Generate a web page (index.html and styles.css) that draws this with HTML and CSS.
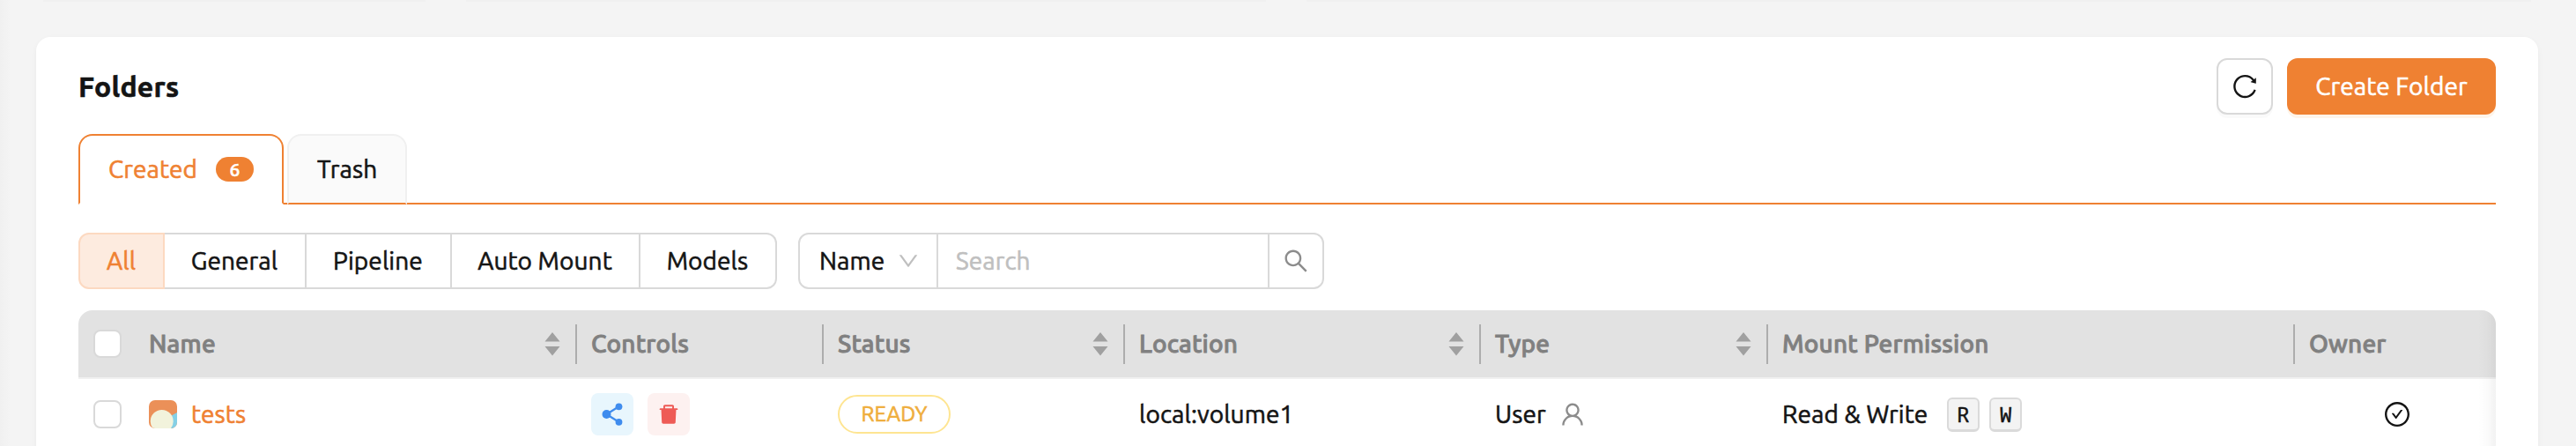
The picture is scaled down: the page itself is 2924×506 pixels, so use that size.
FILE: index.html
```html
<!DOCTYPE html>
<html lang="en">
<head>
<meta charset="utf-8">
<title>Folders</title>
<link rel="stylesheet" href="styles.css">
</head>
<body>
<div class="page">
  <div class="upper-row"><div class="upper-card"></div><div class="upper-card"></div><div class="upper-card"></div></div>
  <main class="card">
    <header class="card-head">
      <h1 class="title">Folders</h1>
      <div class="actions">
        <button class="btn btn-icon" aria-label="Refresh">
          <svg width="28" height="28" viewBox="64 64 896 896" fill="currentColor"><path d="M909.1 209.3l-56.4 44.1C775.8 155.1 656.2 92 521.9 92 290 92 102.3 279.500 102 511.500 101.700 743.700 289.800 932 521.900 932c181.300 0 335.800-115 394.600-276.100 1.500-4.200-.7-8.900-4.900-10.300l-56.700-19.500a8 8 0 00-10.100 4.800c-1.800 5-3.800 10-5.900 14.900-17.300 41-42.100 77.800-73.700 109.400A344.770 344.770 0 01655.900 829c-42.300 17.900-87.400 27-133.800 27-46.500 0-91.500-9.100-133.800-27A341.500 341.500 0 01279 755.200a342.160 342.160 0 01-73.700-109.400c-17.900-42.400-27-87.400-27-133.900s9.100-91.500 27-133.900c17.300-41 42.100-77.800 73.700-109.400 31.600-31.600 68.400-56.400 109.300-73.800 42.300-17.900 87.400-27 133.800-27 46.500 0 91.500 9.100 133.800 27a341.500 341.500 0 01109.300 73.800c9.900 9.900 19.200 20.400 27.800 31.400l-60.200 47a8 8 0 003 14.100l175.600 43c5 1.200 9.900-2.600 9.900-7.700l.8-180.900c-.1-6.600-7.800-10.300-13-6.200z"/></svg>
        </button>
        <button class="btn btn-primary"><span>Create Folder</span></button>
      </div>
    </header>
    <nav class="tabs">
      <div class="tab tab-active"><span class="t-created">Created</span><span class="badge">6</span></div>
      <div class="tab tab-trash"><span class="t-trash">Trash</span></div>
    </nav>
    <div class="filters">
      <div class="segments">
        <div class="seg seg-all"><span>All</span></div>
        <div class="seg seg-general"><span>General</span></div>
        <div class="seg seg-pipeline"><span>Pipeline</span></div>
        <div class="seg seg-auto"><span>Auto Mount</span></div>
        <div class="seg seg-models"><span>Models</span></div>
      </div>
      <div class="search">
        <div class="search-field"><span>Name</span>
          <svg width="24" height="24" viewBox="64 64 896 896" fill="currentColor"><path d="M884 256h-75c-5.100 0-9.900 2.500-12.900 6.600L512 654.200 227.900 262.600c-3-4.100-7.800-6.600-12.900-6.600h-75c-6.500 0-10.300 7.400-6.500 12.700l352.600 486.100c12.800 17.600 39 17.600 51.700 0l352.600-486.100c3.900-5.300.1-12.700-6.400-12.700z"/></svg>
        </div>
        <div class="search-input"><span>Search</span></div>
        <div class="search-go">
          <svg width="28" height="28" viewBox="64 64 896 896" fill="currentColor"><path d="M909.600 854.500L649.900 594.800C690.200 542.700 712 479 712 412c0-80.200-31.300-155.400-87.900-212.100-56.600-56.700-132-87.900-212.100-87.900s-155.500 31.300-212.100 87.900C143.200 256.500 112 331.800 112 412c0 80.100 31.300 155.500 87.900 212.100C256.500 680.800 331.800 712 412 712c67 0 130.600-21.800 182.700-62l259.700 259.600a8.200 8.200 0 0011.600 0l43.600-43.500a8.200 8.200 0 000-11.600zM570.400 570.400C528 612.700 471.800 636 412 636s-116-23.300-158.400-65.600C211.300 528 188 471.800 188 412s23.300-116.100 65.600-158.400C296 211.300 352.200 188 412 188s116.100 23.200 158.400 65.600S636 352.200 636 412s-23.300 116.100-65.600 158.400z"/></svg>
        </div>
      </div>
    </div>
    <section class="table">
      <div class="row row-head">
        <div class="cell cell-check"><i class="checkbox"></i></div>
        <div class="cell cell-first"><span class="h-name">Name</span><svg class="sorter" width="18" height="28" viewBox="0 0 18 28"><path d="M9 1l8.500 10.500H.5zM9 27.500L.5 17h17z"/></svg></div>
        <div class="cell"><span class="h-controls">Controls</span></div>
        <div class="cell"><span class="h-status">Status</span><svg class="sorter" width="18" height="28" viewBox="0 0 18 28"><path d="M9 1l8.500 10.500H.5zM9 27.500L.5 17h17z"/></svg></div>
        <div class="cell"><span class="h-location">Location</span><svg class="sorter" width="18" height="28" viewBox="0 0 18 28"><path d="M9 1l8.500 10.500H.5zM9 27.500L.5 17h17z"/></svg></div>
        <div class="cell"><span class="h-type">Type</span><svg class="sorter" width="18" height="28" viewBox="0 0 18 28"><path d="M9 1l8.500 10.500H.5zM9 27.500L.5 17h17z"/></svg></div>
        <div class="cell"><span class="h-mount">Mount Permission</span></div>
        <div class="cell"><span class="h-owner">Owner</span></div>
      </div>
      <div class="row row-body">
        <div class="cell cell-check"><i class="checkbox"></i></div>
        <div class="cell cell-first cell-name">
          <svg class="avatar" width="32" height="32" viewBox="0 0 32 32"><path fill="#eb9058" d="M0 0h32v32H0z"/><path fill="#84d0e6" d="M32 14v18h-7l-2-13z"/><circle cx="14.700" cy="24" r="13" fill="#f2f3dc"/></svg>
          <span class="t-tests">tests</span>
        </div>
        <div class="cell cell-controls">
          <span class="tool tool-share"><svg width="28" height="28" viewBox="0 0 28 28"><path d="M7.500 14L21 5.500M7.500 14L21 22.500" fill="none" stroke="currentColor" stroke-width="2.200"/><circle cx="7.500" cy="14" r="5" fill="currentColor"/><circle cx="21.500" cy="5.300" r="3.900" fill="currentColor"/><circle cx="21.500" cy="22.800" r="3.900" fill="currentColor"/></svg></span>
          <span class="tool tool-trash"><svg width="24" height="24" viewBox="64 64 896 896" fill="currentColor"><path d="M864 256H736v-80c0-35.300-28.700-64-64-64H352c-35.300 0-64 28.700-64 64v80H160c-17.700 0-32 14.300-32 32v32c0 4.400 3.600 8 8 8h60.400l24.700 523c1.600 34.100 29.800 61 63.900 61h454c34.200 0 62.300-26.800 63.900-61l24.700-523H888c4.400 0 8-3.600 8-8v-32c0-17.700-14.300-32-32-32zm-200 0H360v-72h304v72z"/></svg></span>
        </div>
        <div class="cell"><span class="tag"><span>READY</span></span></div>
        <div class="cell"><span class="t-local">local:volume1</span></div>
        <div class="cell cell-type"><span class="t-user">User</span>
          <svg width="28" height="28" viewBox="64 64 896 896" fill="currentColor"><path d="M858.500 763.600a374 374 0 00-80.600-119.500 375.630 375.630 0 00-119.500-80.600c-.4-.2-.8-.3-1.200-.5C719.500 518 760 444.700 760 362c0-137-111-248-248-248S264 225 264 362c0 82.700 40.500 156 102.800 201.100-.4.200-.8.300-1.200.5-44.800 18.900-85 46-119.500 80.600a375.630 375.630 0 00-80.600 119.500A371.700 371.700 0 00136 901.800a8 8 0 008 8.200h60c4.400 0 7.900-3.500 8-7.800 2-77.200 33-149.500 87.800-204.300 56.700-56.700 132-87.900 212.200-87.900s155.500 31.200 212.200 87.900C779 752.700 810 825 812 902.200c.1 4.400 3.600 7.800 8 7.800h60a8 8 0 008-8.200c-1-47.800-10.900-94.300-29.500-138.200zM512 534c-45.900 0-89.100-17.900-121.600-50.400S340 407.900 340 362c0-45.900 17.900-89.100 50.400-121.600S466.100 190 512 190s89.100 17.900 121.600 50.400S684 316.100 684 362c0 45.900-17.900 89.100-50.400 121.600S557.900 534 512 534z"/></svg>
        </div>
        <div class="cell cell-mount"><span class="t-rw">Read &amp; Write</span><kbd>R</kbd><kbd>W</kbd></div>
        <div class="cell cell-owner">
          <svg width="28" height="28" viewBox="64 64 896 896" fill="currentColor"><path d="M699 353h-46.900c-10.200 0-19.900 4.900-25.900 13.300L469 584.300l-71.200-98.800c-6-8.300-15.600-13.300-25.900-13.300H325c-6.500 0-10.300 7.400-6.500 12.700l124.600 172.800a31.800 31.800 0 0051.700 0l210.600-292c3.900-5.300.1-12.700-6.400-12.700z"/><path d="M512 64C264.600 64 64 264.600 64 512s200.600 448 448 448 448-200.600 448-448S759.400 64 512 64zm0 820c-205.400 0-372-166.600-372-372s166.600-372 372-372 372 166.600 372 372-166.600 372-372 372z"/></svg>
        </div>
      </div>
    </section>
  </main>
</div>
</body>
</html>
```
FILE: styles.css
```css
* { box-sizing: border-box; }
body {
  margin: 0;
  background: #f4f4f4;
  color: #141414;
  font: 28px/40px Ubuntu, "Noto Sans", sans-serif;
  letter-spacing: .1px;
  -webkit-text-stroke: .6px currentColor;
  overflow: hidden;
}
svg { display: block; flex: none; }
span { white-space: nowrap; }
.page {
  height: 506px;
  padding: 0 43px 0 41px;
  overflow: hidden;
  background: linear-gradient(90deg, #f0f0f0, #f4f4f4 12px);
}
.upper-row { display: grid; grid-template-columns: 434px 908px 1fr; gap: 46px; height: 2px; margin-bottom: 40px; padding: 0 8px; }
.upper-card { background: #f0f0f0; }
.card {
  height: 600px;
  padding: 24px 48px;
  background: #fff;
  border-radius: 16px;
  box-shadow: 0 2px 4px rgba(0,0,0,.03), 0 2px 12px rgba(0,0,0,.02);
}
.card-head { display: flex; justify-content: space-between; align-items: center; height: 64px; }
.title { margin: 0; font-size: 32px; line-height: 40px; font-weight: 700; letter-spacing: .25px; }
.actions { display: flex; gap: 16px; }
.btn {
  display: flex; align-items: center; justify-content: center;
  height: 64px; padding: 0; border-radius: 12px;
  font: inherit; letter-spacing: inherit; color: #141414; background: #fff;
}
.btn-icon { width: 64px; border: 2px solid #d9d9d9; box-shadow: 0 4px 0 rgba(0,0,0,.02); }
.btn-primary { width: 237px; border: 0; background: #ef8132; color: #fff; box-shadow: 0 4px 0 #fef4e9; }
.tabs { display: flex; gap: 4px; height: 80px; margin-top: 22px; border-bottom: 2px solid #ef8132; }
.tab {
  display: flex; align-items: center; height: 80px;
  border: 2px solid #f0f0f0; border-bottom-color: #ef8132;
  border-radius: 16px 16px 0 0; background: #fafafa;
}
.tab-active { width: 233px; padding-left: 32px; justify-content: space-between; padding-right: 32px; color: #ef8132; background: #fff; border-color: #ef8132; border-bottom-color: #fff; }
.tab-trash { width: 136px; padding-left: 32px; }
.badge { width: 43px; height: 28px; border-radius: 14px; background: #ef8132; color: #fff; font-size: 21px; line-height: 28px; font-weight: 500; text-align: center; }
.filters { display: flex; gap: 24px; margin-top: 32px; height: 64px; }
.segments { display: flex; width: 793px; }
.seg { display: flex; align-items: center; justify-content: center; border: 2px solid #d9d9d9; border-left: 0; padding-right: 1px; }
.seg-all { width: 98px; color: #ef8132; background: #fdebdf; border: 2px solid #fcd9c1; border-radius: 12px 0 0 12px; }
.seg-general { width: 161px; }
.seg-pipeline { width: 165px; }
.seg-auto { width: 214px; }
.seg-models { width: 155px; border-radius: 0 12px 12px 0; }
.search { display: flex; width: 597px; border: 2px solid #d9d9d9; border-radius: 12px; }
.search-field { display: flex; align-items: center; justify-content: space-between; width: 157px; padding: 0 20px 0 22px; border-right: 2px solid #d9d9d9; }
.search-field svg { color: #bfbfbf; }
.search-input { display: flex; align-items: center; width: 376px; padding-left: 20px; border-right: 2px solid #d9d9d9; color: #bfbfbf; }
.search-go { flex: 1; display: flex; align-items: center; justify-content: center; color: #8c8c8c; }
.table { margin-top: 24px; position: relative; border-radius: 16px 16px 0 0; overflow: hidden; }
.table::after { content: ""; position: absolute; top: 0; right: 0; bottom: 0; width: 20px; background: linear-gradient(90deg, rgba(0,0,0,0), rgba(0,0,0,.015) 50%, rgba(0,0,0,.05)); }
.row { display: grid; grid-template-columns: 65px 501px 280px 342px 404px 326px 598px 228px; }
.row-head { height: 78px; background: #e2e2e2; border-bottom: 2px solid #f0f0f0; color: #808080; font-weight: 500; letter-spacing: .2px; -webkit-text-stroke-width: .9px; }
.row-body { height: 80px; }
.cell { display: flex; align-items: center; justify-content: space-between; padding: 0 19px 0 16px; }
.row-head .cell + .cell:not(:last-child) { background: linear-gradient(#adadad, #adadad) right center / 2px 45px no-repeat; }
.cell-first { padding-left: 15px; }
.checkbox { width: 32px; height: 32px; border: 2px solid #d9d9d9; border-radius: 8px; background: #fff; }
.sorter { fill: #a0a0a0; }
.cell-name { justify-content: flex-start; gap: 16px; color: #ef8132; }
.avatar { border-radius: 7px; }
.cell-controls { justify-content: flex-start; gap: 16px; }
.tool { display: flex; align-items: center; justify-content: center; width: 48px; height: 48px; border-radius: 8px; }
.tool-share { color: #3f8cee; background: #e8f6fd; }
.tool-trash { color: #ee5b56; background: #fdf1f0; }
.tag { display: flex; align-items: center; justify-content: center; width: 128px; height: 44px; border: 2px solid #fee592; border-radius: 22px; color: #efae3d; font-size: 24px; }
.cell-type { justify-content: flex-start; gap: 16px; }
.cell-type svg { color: #8c8c8c; }
.cell-mount { justify-content: flex-start; gap: 11px; }
.t-rw { margin-right: 11px; }
kbd { width: 37px; height: 39px; border: 2px solid #dadada; border-bottom-width: 3px; border-radius: 6px; background: #f3f3f3; font: 25px/34px "Ubuntu Mono", "DejaVu Sans Mono", monospace; text-align: center; }
.cell-check { padding: 0; justify-content: center; }
.cell-owner { justify-content: center; padding: 0 0 0 4px; }
```
